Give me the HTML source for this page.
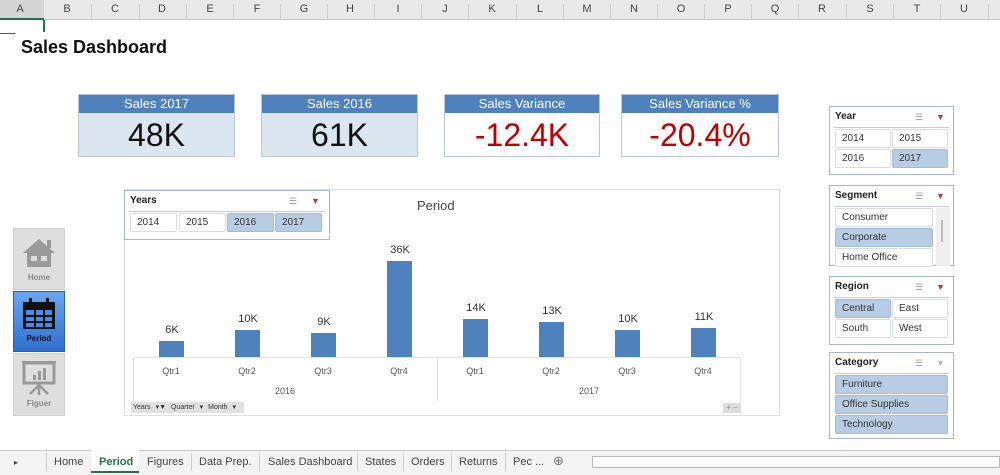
<!DOCTYPE html>
<html><head><meta charset="utf-8"><style>
*{margin:0;padding:0;box-sizing:border-box}
body{width:1000px;height:475px;overflow:hidden;background:#fff;font-family:"Liberation Sans",sans-serif;position:relative}
.a{position:absolute}
.hdr{left:0;top:0;width:1000px;height:20px;background:#e9e9e9;border-bottom:1px solid #c8c8c8}
.col{position:absolute;top:3px;font-size:11px;color:#444;text-align:center;width:20px}
.cl{position:absolute;top:4px;width:1px;height:14px;background:#d0d0d0}
.card{position:absolute;border:1px solid #b9c6d6;height:63px}
.card .h{height:18px;background:#4f81bd;color:#fff;font-size:13px;text-align:center;line-height:18px}
.card .v{height:43px;text-align:center;font-size:32px;line-height:44px}
.sl{position:absolute;border:1px solid #a9b6c4;background:#fff}
.sl .t{position:absolute;left:5px;top:4px;font-size:10px;font-weight:bold;color:#222}
.sl .ln{position:absolute;left:4px;right:4px;top:20px;height:1px;background:#c5ccd5}
.b{position:absolute;height:19px;border:1px solid #d9dde3;font-size:10px;line-height:17px;padding-left:6px;color:#333;background:#fff;border-radius:2px}
.s{background:#b8cce4;border-color:#a6bad2}
.ic{position:absolute;top:5px;font-size:9px;color:#999}
.bar{position:absolute;width:25px;background:#4f81bd;bottom:118px}
.lbl{position:absolute;font-size:11px;color:#333;width:40px;text-align:center}
.ax{position:absolute;font-size:9px;color:#555;width:40px;text-align:center}
.nav{position:absolute;left:13px;width:52px;background:#dedede;border:1px solid #cfcfcf;text-align:center;font-size:8px;font-weight:bold;color:#888}
.tab{position:absolute;top:456px;font-size:11px;color:#444}
.sep{position:absolute;top:453px;width:1px;height:18px;background:#ccc}
</style></head><body>
<div class="a hdr">
<div class="a" style="left:0;top:0;width:44px;height:20px;background:#d5d5d5;border-bottom:2px solid #217346"></div>
<div class="col" style="left:10px">A</div><div class="col" style="left:57px">B</div><div class="col" style="left:105px">C</div><div class="col" style="left:152px">D</div><div class="col" style="left:200px">E</div><div class="col" style="left:247px">F</div><div class="col" style="left:294px">G</div><div class="col" style="left:340px">H</div><div class="col" style="left:388px">I</div><div class="col" style="left:435px">J</div><div class="col" style="left:482px">K</div><div class="col" style="left:530px">L</div><div class="col" style="left:577px">M</div><div class="col" style="left:624px">N</div><div class="col" style="left:671px">O</div><div class="col" style="left:718px">P</div><div class="col" style="left:765px">Q</div><div class="col" style="left:812px">R</div><div class="col" style="left:860px">S</div><div class="col" style="left:907px">T</div><div class="col" style="left:954px">U</div>
<div class="cl" style="left:91px"></div><div class="cl" style="left:139px"></div><div class="cl" style="left:186px"></div><div class="cl" style="left:233px"></div><div class="cl" style="left:280px"></div><div class="cl" style="left:327px"></div><div class="cl" style="left:374px"></div><div class="cl" style="left:421px"></div><div class="cl" style="left:468px"></div><div class="cl" style="left:516px"></div><div class="cl" style="left:563px"></div><div class="cl" style="left:610px"></div><div class="cl" style="left:657px"></div><div class="cl" style="left:704px"></div><div class="cl" style="left:751px"></div><div class="cl" style="left:798px"></div><div class="cl" style="left:846px"></div><div class="cl" style="left:893px"></div><div class="cl" style="left:940px"></div><div class="cl" style="left:988px"></div>
</div>
<div class="a" style="left:43px;top:20px;width:2px;height:12px;background:#217346"></div>
<div class="a" style="left:0;top:33px;width:15px;height:1px;background:#217346"></div>
<div class="a" style="left:21px;top:37px;font-size:18px;font-weight:bold;color:#111">Sales Dashboard</div>

<div class="card" style="left:78px;top:94px;width:157px"><div class="h">Sales 2017</div><div class="v" style="background:#dce6f1;color:#111">48K</div></div>
<div class="card" style="left:261px;top:94px;width:157px"><div class="h">Sales 2016</div><div class="v" style="background:#dce6f1;color:#111">61K</div></div>
<div class="card" style="left:444px;top:94px;width:156px"><div class="h">Sales Variance</div><div class="v" style="color:#c00000">-12.4K</div></div>
<div class="card" style="left:621px;top:94px;width:158px"><div class="h">Sales Variance %</div><div class="v" style="color:#c00000">-20.4%</div></div>

<div class="a" style="left:124px;top:189px;width:656px;height:227px;border:1px solid #e0e0e0"></div>
<div class="a" style="left:417px;top:198px;font-size:13px;color:#444">Period</div>
<div class="a" style="left:133px;top:357px;width:608px;height:44px;border:1px solid #e3e3e3;border-bottom:none"></div>
<div class="a" style="left:437px;top:357px;width:1px;height:44px;background:#e3e3e3"></div>
<div class="bar" style="left:159px;height:16px"></div><div class="lbl" style="left:152px;top:324px">6K</div>
<div class="bar" style="left:235px;height:27px"></div><div class="lbl" style="left:228px;top:313px">10K</div>
<div class="bar" style="left:311px;height:24px"></div><div class="lbl" style="left:304px;top:316px">9K</div>
<div class="bar" style="left:387px;height:96px"></div><div class="lbl" style="left:380px;top:244px">36K</div>
<div class="bar" style="left:463px;height:38px"></div><div class="lbl" style="left:456px;top:302px">14K</div>
<div class="bar" style="left:539px;height:35px"></div><div class="lbl" style="left:532px;top:305px">13K</div>
<div class="bar" style="left:615px;height:27px"></div><div class="lbl" style="left:608px;top:313px">10K</div>
<div class="bar" style="left:691px;height:29px"></div><div class="lbl" style="left:684px;top:311px">11K</div>
<div class="ax" style="left:151px;top:366px">Qtr1</div><div class="ax" style="left:227px;top:366px">Qtr2</div><div class="ax" style="left:303px;top:366px">Qtr3</div><div class="ax" style="left:379px;top:366px">Qtr4</div>
<div class="ax" style="left:455px;top:366px">Qtr1</div><div class="ax" style="left:531px;top:366px">Qtr2</div><div class="ax" style="left:607px;top:366px">Qtr3</div><div class="ax" style="left:683px;top:366px">Qtr4</div>
<div class="ax" style="left:265px;top:386px">2016</div><div class="ax" style="left:569px;top:386px">2017</div>
<div class="a" style="left:131px;top:402px;width:113px;height:11px;background:#e0e0e0;font-size:7px;color:#333;line-height:11px;padding-left:2px;word-spacing:3px">Years ▾▼ Quarter ▾ Month ▾</div>
<div class="a" style="left:723px;top:403px;width:18px;height:10px;background:#ddd;font-size:8px;color:#888;line-height:10px;text-align:center">+ −</div>

<div class="sl" style="left:124px;top:190px;width:206px;height:50px">
<div class="t">Years</div><div class="ic" style="left:164px">☰</div><div class="ic" style="left:186px;color:#a44">▼</div><div class="ln"></div>
<div class="b" style="left:5px;top:22px;width:47px">2014</div><div class="b" style="left:54px;top:22px;width:47px">2015</div><div class="b s" style="left:102px;top:22px;width:47px">2016</div><div class="b s" style="left:150px;top:22px;width:47px">2017</div>
</div>

<div class="nav" style="top:228px;height:62px">
<svg width="40" height="36" viewBox="0 0 40 36" style="margin-top:6px"><path d="M4 18 L20 4 L36 18 L32 18 L32 32 L8 32 L8 18Z" fill="#9a9a9a"/><rect x="12" y="21" width="6" height="5" fill="#ddd"/><rect x="22" y="21" width="6" height="5" fill="#ddd"/><rect x="28" y="5" width="4" height="8" fill="#9a9a9a"/></svg><div>Home</div></div>
<div class="nav" style="top:291px;height:61px;background:linear-gradient(#6aa7f0,#2f6fd0);color:#111;border-color:#2a5fb0">
<svg width="40" height="36" viewBox="0 0 40 36" style="margin-top:4px"><rect x="4" y="6" width="32" height="27" fill="#111"/><rect x="10" y="2" width="3" height="8" fill="#111"/><rect x="27" y="2" width="3" height="8" fill="#111"/><g fill="#4a8ae0"><rect x="7" y="14" width="8" height="5"/><rect x="17" y="14" width="7" height="5"/><rect x="26" y="14" width="7" height="5"/><rect x="7" y="21" width="8" height="4"/><rect x="17" y="21" width="7" height="4"/><rect x="26" y="21" width="7" height="4"/><rect x="7" y="27" width="8" height="4"/><rect x="17" y="27" width="7" height="4"/><rect x="26" y="27" width="7" height="4"/></g></svg><div>Period</div></div>
<div class="nav" style="top:353px;height:63px">
<svg width="40" height="40" viewBox="0 0 40 40" style="margin-top:3px"><rect x="5" y="6" width="30" height="20" fill="none" stroke="#999" stroke-width="3"/><rect x="3" y="4" width="34" height="3" fill="#999"/><rect x="14" y="18" width="3" height="5" fill="#999"/><rect x="19" y="14" width="3" height="9" fill="#999"/><rect x="24" y="11" width="3" height="12" fill="#999"/><path d="M20 26 L20 38 M20 28 L11 37 M20 28 L29 37" stroke="#999" stroke-width="2.5"/></svg><div>Figuer</div></div>

<div class="sl" style="left:829px;top:106px;width:125px;height:69px">
<div class="t">Year</div><div class="ic" style="left:85px">☰</div><div class="ic" style="left:106px;color:#a44">▼</div><div class="ln"></div>
<div class="b" style="left:5px;top:22px;width:56px">2014</div><div class="b" style="left:62px;top:22px;width:56px">2015</div>
<div class="b" style="left:5px;top:42px;width:56px">2016</div><div class="b s" style="left:62px;top:42px;width:56px">2017</div></div>
<div class="sl" style="left:829px;top:185px;width:125px;height:81px">
<div class="t">Segment</div><div class="ic" style="left:85px">☰</div><div class="ic" style="left:106px;color:#a44">▼</div><div class="ln"></div>
<div class="a" style="left:106px;top:22px;width:14px;height:58px;background:#f0f0f0"><div class="a" style="left:5px;top:12px;width:2px;height:22px;background:#bbb"></div></div>
<div class="b" style="left:5px;top:22px;width:98px">Consumer</div><div class="b s" style="left:5px;top:42px;width:98px">Corporate</div><div class="b" style="left:5px;top:62px;width:98px">Home Office</div></div>
<div class="sl" style="left:829px;top:276px;width:125px;height:69px">
<div class="t">Region</div><div class="ic" style="left:85px">☰</div><div class="ic" style="left:106px;color:#a44">▼</div><div class="ln"></div>
<div class="b s" style="left:5px;top:22px;width:56px">Central</div><div class="b" style="left:62px;top:22px;width:56px">East</div>
<div class="b" style="left:5px;top:42px;width:56px">South</div><div class="b" style="left:62px;top:42px;width:56px">West</div></div>
<div class="sl" style="left:829px;top:352px;width:125px;height:87px">
<div class="t">Category</div><div class="ic" style="left:85px">☰</div><div class="ic" style="left:106px;color:#bbb">▼</div><div class="ln"></div>
<div class="b s" style="left:5px;top:22px;width:113px">Furniture</div><div class="b s" style="left:5px;top:42px;width:113px">Office Supplies</div><div class="b s" style="left:5px;top:62px;width:113px">Technology</div></div>

<div class="a" style="left:0;top:450px;width:1000px;height:25px;background:#f3f3f3;border-top:1px solid #ccc"></div>
<div class="tab" style="left:14px;font-size:8px;top:458px">▸</div>
<div class="sep" style="left:46px"></div>
<div class="tab" style="left:54px">Home</div>
<div class="a" style="left:91px;top:450px;width:48px;height:23px;background:#fff;border-bottom:2px solid #217346"></div>
<div class="tab" style="left:99px;color:#217346;font-weight:bold">Period</div>
<div class="tab" style="left:147px">Figures</div><div class="sep" style="left:191px"></div>
<div class="tab" style="left:199px">Data Prep.</div><div class="sep" style="left:259px"></div>
<div class="tab" style="left:268px">Sales Dashboard</div><div class="sep" style="left:357px"></div>
<div class="tab" style="left:365px">States</div><div class="sep" style="left:403px"></div>
<div class="tab" style="left:411px">Orders</div><div class="sep" style="left:451px"></div>
<div class="tab" style="left:459px">Returns</div><div class="sep" style="left:505px"></div>
<div class="tab" style="left:513px">Pec ...</div>
<div class="tab" style="left:553px;font-size:13px;top:453px;color:#777">⊕</div>
<div class="a" style="left:592px;top:456px;width:408px;height:12px;background:#fff;border:1px solid #bbb"></div>
</body></html>
